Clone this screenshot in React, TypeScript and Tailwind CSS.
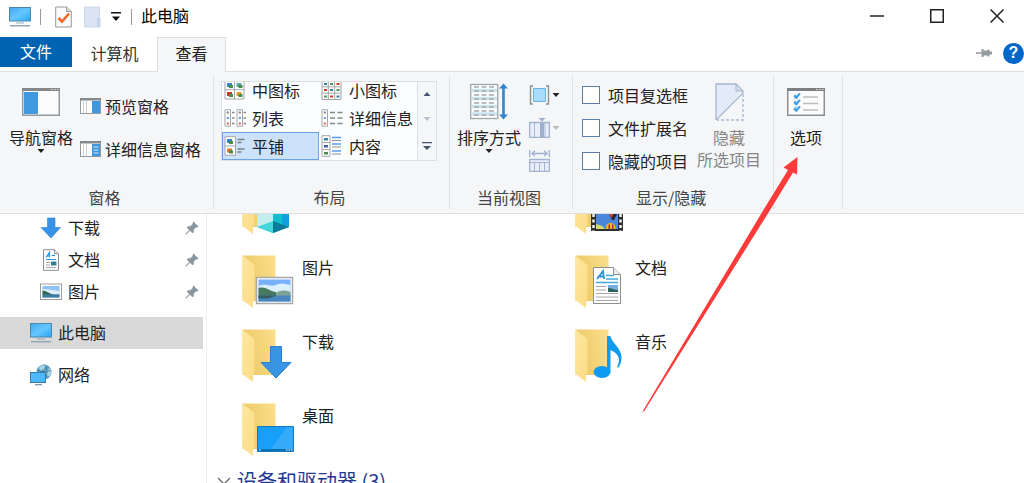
import type { ReactNode } from 'react';

const Caret = ({ className = 'fill-[#222]' }: { className?: string }) => (
	<svg width="8" height="4" viewBox="0 0 8 4" className={className}>
		<path d="M0.5 0h7L4 4z" />
	</svg>
);

const ComputerIcon = () => (
	<svg width="22" height="20" viewBox="0 0 22 20" className="shrink-0">
		<defs>
			<linearGradient id="screen" x1="0" y1="0" x2="1" y2="1">
				<stop offset="0" stopColor="#3fa9f0" />
				<stop offset="0.5" stopColor="#66c7ff" />
				<stop offset="1" stopColor="#2aa6f5" />
			</linearGradient>
		</defs>
		<rect x="0.5" y="0.5" width="21" height="13.5" fill="url(#screen)" stroke="#4b86ad" />
		<path d="M7 15.5h8v1H7z" fill="#8fa9ba" />
		<path d="M1 18h20v1.4H1z" fill="#8fa3b3" />
	</svg>
);

const NetworkIcon = () => (
	<svg width="22" height="22" viewBox="0 0 22 22" className="shrink-0">
		<circle cx="14" cy="8" r="7.6" fill="#5b9fc4" />
		<path d="M9 3c2-2 5-2.600 7-2l-2 4-4 2zM15 7l5-3c2 3 2 6 0 9l-4-2z" fill="#a5d3df" />
		<path d="M14 .5c4 4 4 11 0 15M7 6c5 2 10 2 14 0" fill="none" stroke="#2e6f95" strokeWidth="0.800" />
		<rect x="0.500" y="8.500" width="15" height="10" fill="#4ab8fb" stroke="#387ca8" />
		<path d="M5 20h7v1.300H5z" fill="#7d98aa" />
	</svg>
);

const Arrow = () => (
	<svg width="22" height="22" viewBox="0 0 22 22" className="shrink-0">
		<path d="M7.500 1h7.500v9.500h5.500L11 21 1 10.500h6.500z" fill="#3893e4" stroke="#2a7fcb" strokeWidth="0.600" />
	</svg>
);

const DocumentIcon = () => (
	<svg width="22" height="22" viewBox="0 0 22 22" className="shrink-0">
		<path d="M3.500 .7h11l4 4v16.600h-15z" fill="#fff" stroke="#8c8f92" />
		<path d="M14.500 .7v4h4" fill="#eee" stroke="#8c8f92" />
		<path d="M6 8.500l3.500-5v5M6.500 7h3M11.500 6.500h3.500M6 10.500h10" fill="none" stroke="#2a94dc" strokeWidth="1.200" />
		<path d="M6 13.500h4M6 16h4M6 18.500h10" stroke="#aaa" />
		<path d="M11 12.500h5.500v4H11z" fill="#347c9e" />
	</svg>
);

const PictureIcon = () => (
	<svg width="22" height="18" viewBox="0 0 22 18" className="shrink-0">
		<rect x="0.500" y="1" width="21" height="15.500" fill="#fff" stroke="#9a9da0" />
		<path d="M2.500 3h17v11.500h-17z" fill="#8ec1f5" />
		<path d="M2.500 6c5 0 10 1 17 2v3h-17z" fill="#dceefb" />
		<path d="M2.500 7.500c3 0 7 3 12 4.500h-12z" fill="#2f6b50" />
		<path d="M2.500 11.500h17v3h-17z" fill="#3d79a0" />
	</svg>
);

const Pin = () => (
	<svg width="14" height="14" viewBox="0 0 14 14" className="shrink-0">
		<path d="M8.500 .5l5 5-1.200 1-1-.3-2.600 2.600.2 2.200-1.400 1.300L5 9.800 1 13.500H.3v-.8L4.200 9 1.700 6.500 3 5.200l2.200.1 2.600-2.500-.3-1.200z" fill="#8b979f" />
	</svg>
);

// window with a blue pane on one side
const PaneIcon = ({ kind }: { kind: 'preview' | 'details' }) => (
	<svg width="21" height="16" viewBox="0 0 21 16" className="shrink-0">
		<rect x="0.500" y="0.500" width="20" height="15" fill="#fcfcfc" stroke="#96999c" />
		<path d="M0 0h21v2.500H0z" fill="#85898c" />
		<path d="M6.500 3v12M3.500 3v12" stroke="#cfd2d4" />
		<path d="M12 3h8v12h-8z" fill="#3d98df" />
		{kind === 'details' && <path d="M13.500 6h5M13.500 9h5M13.500 12h5" stroke="#d7ecfb" />}
	</svg>
);

const NavigationPaneIcon = () => (
	<svg width="38" height="28" viewBox="0 0 38 28">
		<rect x="0.750" y="0.750" width="36.500" height="26.500" fill="#fbfbfb" stroke="#96999c" strokeWidth="1.500" />
		<path d="M0 0h38v3H0z" fill="#85898c" />
		<path d="M29 1.500h1.500M32 1.500h1.500M35 1.500h1.500" stroke="#ddd" />
		<path d="M2 4h14v22H2z" fill="#4199e0" />
	</svg>
);

const OptionsIcon = () => (
	<svg width="38" height="28" viewBox="0 0 38 28">
		<rect x="0.750" y="0.750" width="36.500" height="26.500" fill="#fcfcfc" stroke="#8c8f92" strokeWidth="1.500" />
		<path d="M0 0h38v3H0z" fill="#7c8083" />
		<path d="M29 1.500h1.500M32 1.500h1.500M35 1.500h1.500" stroke="#ddd" />
		<path d="M7 6.500h4v4H7zM7 12.500h4v4H7zM7 18.500h4v4H7z" fill="#a9d5f5" />
		<path d="M7 7.500l2.300 2.300 3.700-4.500M7 14l2.300 2.300 3.700-4.500M7 20.500l2.300 2.300 3.700-4.500" fill="none" stroke="#3f9fe6" strokeWidth="2" />
		<path d="M16 9h15M16 15.500h15M16 22h15" stroke="#b9bcbe" strokeWidth="1.300" />
	</svg>
);

const SortIcon = () => (
	<svg width="38" height="37" viewBox="0 0 38 37">
		<rect x="0.750" y="1.500" width="27" height="34" fill="#fff" stroke="#a2a5a7" strokeWidth="1.300" />
		<path d="M2 7.500h25M2 15.500h25M2 23.500h25M2 31h25" stroke="#cbe6f3" strokeWidth="3.500" />
		<path d="M4 4h20M4 8h20M4 12h20M4 16h20M4 20h20M4 24h20M4 28h20M4 32h20" stroke="#a3a9ad" strokeWidth="1.300" strokeDasharray="5 2.500" />
		<path d="M33.500 3v31" stroke="#2f86cf" strokeWidth="2.600" />
		<path d="M29 5.500L33.500 .5 38 5.500zM29 31.500l4.500 5 4.500-5z" fill="#2f86cf" />
	</svg>
);

const GroupByIcon = () => (
	<svg width="21" height="20" viewBox="0 0 21 20">
		<path d="M4 1H1.500v18H4M17 1h2.500v18H17" fill="none" stroke="#8b8f92" strokeWidth="1.400" />
		<path d="M4.500 3.500h12v13h-12z" fill="#a9dcff" stroke="#69b3e4" />
	</svg>
);

const AddColumnsIcon = () => (
	<svg width="21" height="20" viewBox="0 0 21 20">
		<path d="M.7 4.500h19.600v14.800H.7z" fill="#e8effb" stroke="#a3b3cf" strokeWidth="1.300" />
		<path d="M5.500 5v14M16 5v14" stroke="#a8b8d4" />
		<path d="M11 5h4v14h-4z" fill="#9dafcd" />
		<path d="M9.500 0h7L13 3.500z" fill="#9dafcd" />
	</svg>
);

const SizeColumnsIcon = () => (
	<svg width="21" height="22" viewBox="0 0 21 22">
		<path d="M.7 0v7M20.300 0v7M3 3.500h15M6 .8L3 3.500l3 2.700M15 .8l3 2.700-3 2.700" fill="none" stroke="#9dafcd" strokeWidth="1.300" />
		<path d="M.7 9.500h19.600v11.800H.7z" fill="#e8effb" stroke="#a3b3cf" strokeWidth="1.300" />
		<path d="M1 12.500h19M5.500 13v8M10.500 13v8M15.500 13v8" stroke="#a3b3cf" />
	</svg>
);

const HideIcon = () => (
	<svg width="29" height="38" viewBox="0 0 29 38">
		<path d="M1 1h20l7 7L1 36z" fill="#e3ebf9" />
		<path d="M1 37V1h20l7 7v2L1 37" fill="none" stroke="#a9b6cd" strokeWidth="1.300" />
		<path d="M21 1v7h7z" fill="#d0dbed" stroke="#a9b6cd" />
		<path d="M28 11v26H2" fill="none" stroke="#a9b6cd" strokeWidth="1.300" strokeDasharray="3 2" />
	</svg>
);

const Thumb = ({ x, y, color = '#2f86cf' }: { x: number; y: number; color?: string }) => (
	<g transform={`translate(${x} ${y})`}>
		<path d="M0 0h5v4H0z" fill={color} />
		<path d="M2 2h4v3H2z" fill="#4a8a4e" />
	</g>
);

const MediumIcon = () => (
	<svg width="22" height="20" viewBox="0 0 22 20" className="shrink-0">
		<path d="M1 .7h19v18.300H1zM10.500 .7V19M1 9.700h19" fill="#fff" stroke="#a3a5a7" />
		<Thumb x={3} y={3} />
		<Thumb x={12.500} y={3} color="#58a8a0" />
		<Thumb x={3} y={12} color="#cc3a22" />
		<Thumb x={12.500} y={12} color="#e0a02c" />
	</svg>
);

const SmallIcon = () => (
	<svg width="22" height="20" viewBox="0 0 22 20" className="shrink-0">
		<path d="M1 .5h19v19H1zM7.300 .5v19M13.700 .5v19M1 6.800h19M1 13.200h19" fill="#fff" stroke="#a3a5a7" />
		<path d="M3 3h3v2H3zM9 9h3v2H9zM15.500 15.500h3v2h-3z" fill="#2f7eb4" />
		<path d="M9 3h3v2H9zM3 15.500h3v2H3zM15.500 9h3v2h-3z" fill="#4d9a58" />
		<path d="M15.500 3h3v2h-3zM3 9h3v2H3zM9 15.500h3v2H9z" fill="#c8402b" />
	</svg>
);

const ListIcon = () => (
	<svg width="22" height="18" viewBox="0 0 22 18" className="shrink-0">
		<path d="M1 .7h5.500v16.500H1zM13 .7h5.500v16.500H13z" fill="#fff" stroke="#a3a5a7" />
		<path d="M8 3.500h2.500M8 9h2.500M8 14.500h2.500M19.500 3.500H22M19.500 9H22M19.500 14.500H22" stroke="#888" strokeWidth="1.300" />
		<path d="M2.800 2.500h2v2h-2zM14.800 2.500h2v2h-2z" fill="#777" />
		<path d="M2.800 8h2v2h-2zM14.800 8h2v2h-2z" fill="#5b9cf0" />
		<path d="M2.800 13.500h2v2h-2zM14.800 13.500h2v2h-2z" fill="#e05a4a" />
	</svg>
);

const DetailsIcon = () => (
	<svg width="22" height="18" viewBox="0 0 22 18" className="shrink-0">
		<path d="M1 .7h5.500v16.500H1z" fill="#fff" stroke="#a3a5a7" />
		<path d="M9 3.500h5M9 9h5M9 14.500h5M16.500 3.500h5M16.500 9h5M16.500 14.500h5" stroke="#888" strokeWidth="1.300" />
		<path d="M2.800 2.500h2v2h-2z" fill="#777" />
		<path d="M2.800 8h2v2h-2z" fill="#5b9cf0" />
		<path d="M2.800 13.500h2v2h-2z" fill="#e05a4a" />
	</svg>
);

const TilesIcon = () => (
	<svg width="22" height="20" viewBox="0 0 22 20" className="shrink-0">
		<path d="M1 .7h10.500v18.600H1zM1 10h10.500" fill="#fff" stroke="#a3a5a7" />
		<Thumb x={3} y={3} />
		<Thumb x={3} y={12.500} color="#d9772c" />
		<path d="M13.500 3.500h7M13.500 6.500h4M13.500 13h7M13.500 16h4" stroke="#7b8086" strokeWidth="1.300" />
	</svg>
);

const ContentIcon = () => (
	<svg width="22" height="22" viewBox="0 0 22 22" className="shrink-0">
		<path d="M1 .7h8v20.600H1zM1 7.500h8M1 14.500h8" fill="#fff" stroke="#a3a5a7" />
		<path d="M3 3h4v2.500H3z" fill="#2f86a8" />
		<path d="M3 10h4v2.500H3z" fill="#3b5fa8" />
		<path d="M3 17h4v2.500H3z" fill="#4a8a4e" />
		<path d="M11 2.500h9M11 9h9M11 16h9" stroke="#5a9bf2" strokeWidth="1.500" />
		<path d="M11 5.500h9M11 12h9M11 19h9" stroke="#8c9299" strokeWidth="1.200" />
	</svg>
);

const views = [
	{ name: '中图标', icon: <MediumIcon /> },
	{ name: '小图标', icon: <SmallIcon /> },
	{ name: '列表', icon: <ListIcon /> },
	{ name: '详细信息', icon: <DetailsIcon /> },
	{ name: '平铺', icon: <TilesIcon />, active: true },
	{ name: '内容', icon: <ContentIcon /> },
];

const quickAccess = [
	{ name: '下载', icon: <Arrow /> },
	{ name: '文档', icon: <DocumentIcon /> },
	{ name: '图片', icon: <PictureIcon /> },
];

const checks = ['项目复选框', '文件扩展名', '隐藏的项目'];

const Folder = ({ children }: { children: ReactNode }) => (
	<svg width="54" height="54" viewBox="0 0 54 54" className="shrink-0">
		<defs>
			<linearGradient id="back" x1="0" y1="0.300" x2="1" y2="0">
				<stop offset="0" stopColor="#ecc968" />
				<stop offset="1" stopColor="#fcdf8c" />
			</linearGradient>
			<linearGradient id="flap" x1="0" y1="0" x2="1" y2="1">
				<stop offset="0" stopColor="#ffe7a0" />
				<stop offset="1" stopColor="#fbdc85" />
			</linearGradient>
		</defs>
		<path d="M.5 .5h33V46H.5z" fill="url(#back)" />
		<path d="M.5 .5l12 9.500v35h-1.500v8L.5 45z" fill="url(#flap)" />
		{children}
	</svg>
);

const folders = [
	{
		id: 'objects',
		name: '',
		art: (
			<>
				<path d="M15 22l16-8 16 8v24l-16 6-16-6z" fill="#27bcd4" />
				<path d="M15 22l16 6v14l-16 5z" fill="#c5edf0" />
				<path d="M31 20l16-6v32l-16-6z" fill="#0f9fda" />
				<path d="M31 24l9 3v16l-9-3z" fill="#12bfcf" />
				<path d="M15 46l16-6v12z" fill="#45d5dd" />
				<path d="M31 40l16 6-16 6z" fill="#087c98" />
			</>
		),
	},
	{
		id: 'videos',
		name: '',
		art: (
			<>
				<path d="M16 20h32v30H16z" fill="#2e2e2e" />
				<path d="M21 20h22v28H21z" fill="#4d86dd" />
				<path d="M18.500 22v28M45.500 22v28" stroke="#f3f3f3" strokeWidth="2.500" strokeDasharray="3 2.500" />
				<path d="M34 33h8l-3 6h-2z" fill="#302038" />
				<path d="M34 33h4l-1 4z" fill="#d94b33" />
				<path d="M31 48c-1-8 10-8 9.500 0z" fill="#efb91e" />
				<path d="M33.500 43.500H35V48h-1.500zM37 43.500h1.500V48H37z" fill="#a82c42" />
				<path d="M21 43l6 2 3 3h-9z" fill="#d5dc68" />
			</>
		),
	},
	{
		id: 'pictures',
		name: '图片',
		art: (
			<>
				<path d="M14.500 22.500h36v26h-36z" fill="#fff" stroke="#a9a9a9" strokeWidth="1.500" />
				<path d="M16.500 24.500h32v22h-32z" fill="#79b0fb" />
				<path d="M16.500 31c7-3 12 1 17-1s9-1 15 0v10h-32z" fill="#dceffc" />
				<path d="M16.500 33c7-2 11 3 17 4l6 4h-23z" fill="#477961" />
				<path d="M34 38c5-3 9-3 14.500-1v4H34z" fill="#7da394" />
				<path d="M16.500 40.500h32v6h-32z" fill="#4a86bd" />
				<path d="M16.500 40.500h18l-8 3h-10z" fill="#345f68" />
			</>
		),
	},
	{
		id: 'documents',
		name: '文档',
		art: (
			<>
				<path d="M18.500 12.500h20l7 7v29h-27z" fill="#fff" stroke="#8d8f91" />
				<path d="M38.500 12.500v7h7" fill="#eceeef" stroke="#8d8f91" />
				<path d="M22 24l6-8 1 8M24 21.500h5" fill="none" stroke="#2a92d3" strokeWidth="1.800" />
				<path d="M31 20.500h8M31 24h12M21 27.500h22" stroke="#45a9df" strokeWidth="1.300" />
				<path d="M21 31.500h10M21 35h10M21 38.500h22M21 42h22M21 45.500h22" stroke="#a6a8aa" />
				<path d="M33 30h10v7H33z" fill="#78aee0" />
				<path d="M33 33c4 0 6 2 10 2v2H33z" fill="#2d6558" />
			</>
		),
	},
	{
		id: 'downloads',
		name: '下载',
		art: <path d="M28.500 17.500h11v16h9.500L34 49 19 33.500h9.500z" fill="#3a94e4" stroke="#2b7fcd" />,
	},
	{
		id: 'music',
		name: '音乐',
		art: (
			<>
				<ellipse cx="27" cy="43" rx="8.500" ry="6" fill="#0f9bf0" />
				<path d="M32 7h3.500c1 7 11 12 11 21 0 5-1 8-3.500 11-1-.5-1-1 0-3 3-8-1-12-7.500-15v22H32z" fill="#0f9bf0" />
			</>
		),
	},
	{
		id: 'desktop',
		name: '桌面',
		art: (
			<>
				<path d="M15.500 23.500h36v25h-36z" fill="#179ff9" stroke="#1678b6" />
				<path d="M29 46L45 24h6v22z" fill="#36abfa" />
				<path d="M16 46h35v2H16z" fill="#0874b8" />
				<path d="M17 47h1.500M44 47h1.500M46.500 47H48M49 47h1.500" stroke="#fff" />
			</>
		),
	},
];

const Group = ({ label, children }: { label?: string; children: ReactNode }) => (
	<section className="flex shrink-0">
		<div className="flex flex-col justify-between pb-1.5">
			<div className="flex items-start">{children}</div>
			<div className="pr-1 text-center leading-5 text-[#444]">{label}</div>
		</div>
		<div className="my-1 w-px bg-[#dfe1e3]" />
	</section>
);

const TitleBar = () => (
	<header className="flex h-[37px] items-start justify-between">
		<div className="flex h-[33px] items-center pl-[9px]">
			<ComputerIcon />
			<span className="ml-[9px] h-4 w-px bg-[#999]" />
			<button type="button" aria-label="属性" className="ml-3.5">
				<svg width="17" height="22" viewBox="0 0 17 22">
					<path d="M.7 1h11l4.600 4.500V21H.7z" fill="#fafafa" stroke="#999" />
					<path d="M11.700 1v4.500h4.600" fill="#ddd" stroke="#999" />
					<path d="M3.500 12l3.500 3.500 7-8" fill="none" stroke="#f0672c" strokeWidth="2.600" />
				</svg>
			</button>
			<button type="button" aria-label="新建文件夹" className="ml-3">
				<svg width="17" height="22" viewBox="0 0 17 22">
					<path d="M.5 1h15v20H.5z" fill="#dbe4f4" stroke="#ccd7ea" />
					<path d="M13 12h3.500v9H13z" fill="#c9d5e9" />
				</svg>
			</button>
			<button type="button" aria-label="自定义快速访问工具栏" className="ml-2.5">
				<svg width="10" height="9" viewBox="0 0 10 9" fill="#111">
					<path d="M0 0h10v1.500H0zM1 4.500h8L5 9z" />
				</svg>
			</button>
			<span className="ml-2.5 h-4 w-px bg-[#999]" />
			<h1 className="ml-[9px] pb-1 text-black">此电脑</h1>
		</div>
		<div className="flex h-8 gap-1.5">
			<button type="button" aria-label="最小化" className="flex w-[54px] items-center justify-center">
				<svg width="14" height="14" viewBox="0 0 14 14" stroke="#222" strokeWidth="1.500">
					<path d="M0 7h14" />
				</svg>
			</button>
			<button type="button" aria-label="最大化" className="flex w-[54px] items-center justify-center">
				<svg width="14" height="14" viewBox="0 0 14 14" fill="none" stroke="#222" strokeWidth="1.500">
					<path d="M.75 .75h12.500v12.500H.75z" />
				</svg>
			</button>
			<button type="button" aria-label="关闭" className="flex w-[54px] items-center justify-center">
				<svg width="14" height="14" viewBox="0 0 14 14" stroke="#222" strokeWidth="1.500">
					<path d="M.5 .5l13 13M13.500 .5l-13 13" />
				</svg>
			</button>
		</div>
	</header>
);

const Tabs = () => (
	<nav className="flex h-[34px] items-start">
		<button type="button" className="h-[30px] w-[72px] bg-[#0063b1] pb-0.5 text-white">
			文件
		</button>
		<button type="button" className="h-8 w-[85px] text-[#333]">
			计算机
		</button>
		<button type="button" className="z-10 h-[35px] w-[69px] border border-b-0 border-[#dcdee0] bg-[#f4f6f8] pb-1 text-[#222]">
			查看
		</button>
		<div className="ml-auto flex h-8 items-center gap-2.5">
			<button type="button" aria-label="固定功能区">
				<svg width="17" height="10" viewBox="0 0 17 10" fill="#939ba1">
					<path d="M0 4.200h6v1.600H0zM5.500 1h2v1.500h4V1.500h2v2H16v3h-2.500v2h-2v-1h-4V9h-2z" />
				</svg>
			</button>
			<button
				type="button"
				aria-label="帮助"
				className="size-[21px] rounded-full bg-[#0066c8] text-center font-['Liberation_Sans',sans-serif] leading-5 font-bold text-white"
			>
				?
			</button>
		</div>
	</nav>
);

const Ribbon = () => (
	<div className="flex h-[143px] border-y border-[#dcdee0] bg-[#f4f6f8]">
		<Group label="窗格">
			<button type="button" className="ml-[9px] flex flex-col items-center pt-4">
				<NavigationPaneIcon />
				<span className="mt-[9px] leading-6">导航窗格</span>
				<Caret />
			</button>
			<div className="mr-3 ml-[7px] flex flex-col gap-[19px] pt-[22px]">
				<button type="button" className="flex h-6 items-center gap-1">
					<PaneIcon kind="preview" />
					预览窗格
				</button>
				<button type="button" className="flex h-6 items-center gap-1">
					<PaneIcon kind="details" />
					详细信息窗格
				</button>
			</div>
		</Group>

		<Group label="布局">
			<div className="mt-[9px] mr-3 ml-[7px] flex h-20 w-[216px] border border-[#dcdee0] bg-[#fbfdfe]">
				<div className="grid flex-1 grid-cols-[97px_99px] grid-rows-[28px_28px_28px] content-end overflow-hidden">
					{views.map((view) => (
						<button
							key={view.name}
							type="button"
							className={
								view.active
									? 'flex items-center gap-1.5 bg-[#cce2fb] pl-0.5 outline -outline-offset-1 outline-[#6aa5e3]'
									: 'flex items-center gap-1.5 pl-0.5'
							}
						>
							{view.icon}
							{view.name}
						</button>
					))}
				</div>
				<div className="flex w-[19px] flex-col items-center justify-around border-l border-[#dcdee0] bg-[#f4f6f8]">
					<button type="button" aria-label="向上" className="rotate-180">
						<Caret className="fill-[#44546a]" />
					</button>
					<button type="button" aria-label="向下">
						<Caret className="fill-[#b8bfc8]" />
					</button>
					<button type="button" aria-label="更多">
						<svg width="10" height="8" viewBox="0 0 10 8" fill="#44546a">
							<path d="M0 0h10v1.300H0zM1 4h8L5 8z" />
						</svg>
					</button>
				</div>
			</div>
		</Group>

		<Group label="当前视图">
			<button type="button" className="ml-[7px] flex flex-col items-center pt-[11px]">
				<SortIcon />
				<span className="mt-[5px] leading-6">排序方式</span>
				<Caret />
			</button>
			<div className="mr-3 ml-2 flex flex-col pt-1.5">
				<button type="button" aria-label="分组依据" className="flex h-[33px] items-center gap-0.5">
					<GroupByIcon />
					<Caret />
				</button>
				<button type="button" aria-label="添加列" className="flex h-[33px] items-center gap-0.5">
					<AddColumnsIcon />
					<Caret className="fill-[#bbb]" />
				</button>
				<button type="button" aria-label="将所有列调整为合适的大小" className="flex h-[33px] items-center">
					<SizeColumnsIcon />
				</button>
			</div>
		</Group>

		<Group label="显示/隐藏">
			<div className="ml-[9px] pt-1.5">
				{checks.map((name) => (
					<label key={name} className="flex h-[33px] items-center gap-2">
						<input type="checkbox" className="size-[18px] appearance-none border border-[#5f7bab] bg-white" />
						{name}
					</label>
				))}
			</div>
			<button type="button" className="mr-3 ml-[9px] flex flex-col items-center pt-[11px] text-[#858585]">
				<HideIcon />
				<span className="mt-[5px] leading-[22px]">
					隐藏
					<br />
					所选项目
				</span>
			</button>
		</Group>

		<Group>
			<button type="button" className="flex w-[68px] flex-col items-center pt-4 pr-1">
				<OptionsIcon />
				<span className="mt-[9px] leading-6">选项</span>
			</button>
		</Group>
	</div>
);

const Sidebar = () => (
	<aside className="w-[207px] shrink-0 border-r border-[#eceeef] pr-[3px]">
		<ul className="-mt-0.5">
			{quickAccess.map((item) => (
				<li key={item.name}>
					<a href="#" className="flex h-8 items-center pr-1 pl-10">
						{item.icon}
						<span className="ml-1.5 flex-1 pb-0.5">{item.name}</span>
						<Pin />
					</a>
				</li>
			))}
		</ul>
		<a href="#" className="mt-[9px] flex h-8 items-center gap-1.5 bg-[#d9d9d9] pl-[30px]">
			<ComputerIcon />
			<span className="pb-0.5">此电脑</span>
		</a>
		<a href="#" className="mt-2.5 flex h-8 items-center gap-1.5 pl-[30px]">
			<NetworkIcon />
			<span className="pb-0.5">网络</span>
		</a>
	</aside>
);

const App = () => {
	return (
		<div className="relative flex h-screen flex-col overflow-hidden bg-white font-['Noto_Sans_CJK_SC',sans-serif] text-base text-[#222]">
			<TitleBar />
			<Tabs />
			<Ribbon />
			<div className="flex min-h-0 flex-1 overflow-hidden">
				<Sidebar />
				<main className="min-w-0 flex-1">
					<div className="-mt-[33px] grid grid-cols-[repeat(auto-fill,333px)] gap-y-5 pl-[35px]">
						{folders.map((folder) => (
							<a key={folder.id} href="#" className="flex items-start gap-1.5">
								<Folder>{folder.art}</Folder>
								<span className="leading-6">{folder.name}</span>
							</a>
						))}
					</div>
					<h2 className="mt-2.5 flex items-center gap-1.5 pl-2.5 text-xl text-[#1f3a93]">
						<svg width="14" height="8" viewBox="0 0 14 8" fill="none" stroke="#777" strokeWidth="1.500">
							<path d="M1 1l6 6 6-6" />
						</svg>
						设备和驱动器 (3)
					</h2>
				</main>
			</div>

			{/* pointer towards the options button */}
			<svg className="pointer-events-none absolute top-[157px] left-[642px]" width="157" height="256" viewBox="0 0 157 256">
				<path d="M.5 254.500L119 57 146 13l-4.500-2.500L155.500 0l-.5 17.500-4-2L125 58 2 254.500z" fill="#fb3b3a" />
			</svg>
		</div>
	);
};

export default App;
